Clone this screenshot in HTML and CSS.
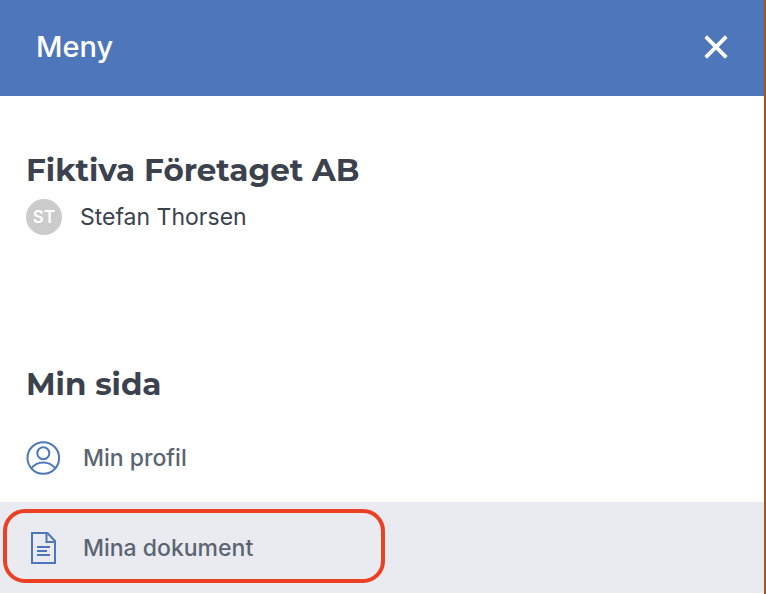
FILE: index.html
```
<!DOCTYPE html>
<html lang="sv">
<head>
  <meta charset="UTF-8" />
  <meta name="viewport" content="width=device-width, initial-scale=1.0"/>
  <title>Meny</title>
  <link rel="stylesheet" href="styles.css">
</head>
<body>
  <div class="menu">
    <header class="menu-header">
      <h1>Meny</h1>
      <button class="close" type="button" aria-label="Stäng">
        <svg width="24" height="24" viewBox="0 0 24 24" fill="none" stroke="#fff" stroke-width="3.8">
          <path d="M1.7 1.7 22.3 22.3M22.3 1.7 1.7 22.3"/>
        </svg>
      </button>
    </header>

    <section class="account">
      <h2>Fiktiva Företaget AB</h2>
      <div class="user">
        <span class="avatar">ST</span>
        <span class="user-name">Stefan Thorsen</span>
      </div>
    </section>

    <nav class="my-page">
      <h2>Min sida</h2>
      <a class="item" href="#profil">
        <svg width="34" height="34" viewBox="0 0 34 34" fill="none" stroke="#4e76bb" stroke-width="2">
          <circle cx="17.3" cy="17" r="15.8"/>
          <circle cx="17.3" cy="12.3" r="6"/>
          <path d="M5.4 27.2C8.4 23.4 12.4 21.5 17.3 21.5s8.8 2 11.8 5.7"/>
        </svg>
        <span>Min profil</span>
      </a>
      <a class="item active" href="#dokument">
        <svg width="34" height="34" viewBox="0 0 34 34" fill="none" stroke="#4e76bb" stroke-width="2">
          <path d="M6 2h15.5L29 10v22H6z"/>
          <path d="M20.5 2v9H29"/>
          <path d="M11 16h13M11 20h10M11 24h13"/>
        </svg>
        <span>Mina dokument</span>
      </a>
    </nav>
  </div>
</body>
</html>
```
FILE: styles.css
```
*, *::after { box-sizing: border-box; margin: 0; padding: 0; }
body {
  font-family: Inter, 'Liberation Sans', sans-serif;
  background: #fff;
  color: #3c424d;
}
.menu { min-height: 100vh; border-right: 2px solid #a9521f; }
.menu-header {
  display: flex; justify-content: space-between; align-items: center;
  height: 96px;
  padding: 0 36px 2px;
  background: #4e76bb;
  color: #fff;
}
.menu-header h1 { font-size: 29px; font-weight: 500; line-height: 36px; }
.close { display: flex; border: none; background: none; cursor: pointer; }
h2 { font-family: Montserrat, Inter, sans-serif; font-size: 31px; font-weight: 700; line-height: 40px; }
.account { padding: 54px 26px 0; }
.user { display: flex; align-items: center; gap: 18px; margin-top: 9px; }
.avatar {
  display: flex; justify-content: center; align-items: center;
  width: 36px; height: 36px;
  border-radius: 50%;
  background: #cbcbcb;
  color: #fff;
  font-size: 17px; font-weight: 600;
}
.user-name { font-size: 23px; line-height: 32px; }
.my-page { margin-top: 129px; }
.my-page h2 { padding: 0 26px; margin-bottom: 10px; }
.item {
  display: flex; align-items: center; gap: 23px;
  height: 88px;
  padding: 0 26px;
  color: #5b6472;
  font-size: 23px; font-weight: 500; line-height: 32px;
  text-decoration: none;
}
.item.active { position: relative; height: 91px; background: #eaebf0; }
/* red marker around the current item */
.item.active::after {
  content: '';
  position: absolute; top: 7px; left: 3px;
  width: 50%; height: 74px;
  border: 4px solid #ec4025;
  border-radius: 22px;
}
```
